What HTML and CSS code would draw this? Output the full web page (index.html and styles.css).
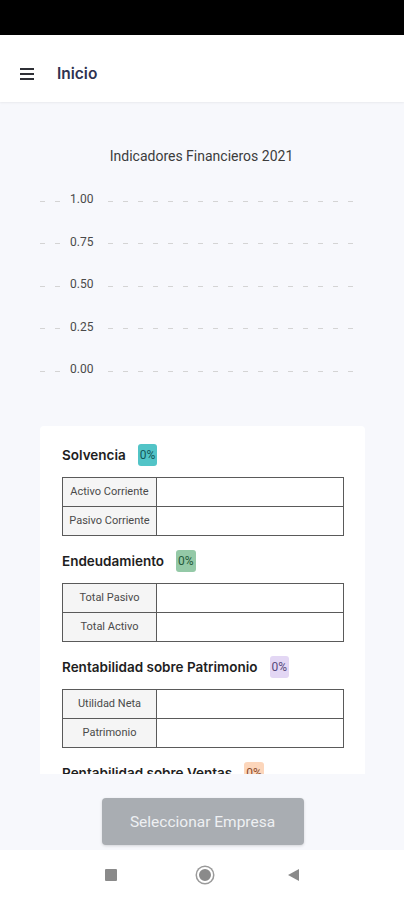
FILE: index.html
```html
<!DOCTYPE html>
<html>
    <head>
        <link rel="stylesheet" href="styles.css">
    </head>
    <body>
        <div class="status-bar"></div>
        <header class="app-bar">
            <span class="menu-icon"><i></i><i></i><i></i></span>
            <span class="app-title">Inicio</span>
        </header>
        <main class="content">
            <div class="scroll">
                <section class="chart">
                    <h2 class="chart-title">Indicadores Financieros 2021</h2>
                    <div class="axis-row"><span class="dash short"></span><span class="tick">1.00</span><span class="dash"></span></div>
                    <div class="axis-row"><span class="dash short"></span><span class="tick">0.75</span><span class="dash"></span></div>
                    <div class="axis-row"><span class="dash short"></span><span class="tick">0.50</span><span class="dash"></span></div>
                    <div class="axis-row"><span class="dash short"></span><span class="tick">0.25</span><span class="dash"></span></div>
                    <div class="axis-row"><span class="dash short"></span><span class="tick">0.00</span><span class="dash"></span></div>
                </section>
                <section class="card">
                    <div class="indicator">
                        <h3>Solvencia <span class="badge teal">0%</span></h3>
                        <table>
                            <tr><th>Activo Corriente</th><td></td></tr>
                            <tr><th>Pasivo Corriente</th><td></td></tr>
                        </table>
                    </div>
                    <div class="indicator">
                        <h3>Endeudamiento <span class="badge green">0%</span></h3>
                        <table>
                            <tr><th>Total Pasivo</th><td></td></tr>
                            <tr><th>Total Activo</th><td></td></tr>
                        </table>
                    </div>
                    <div class="indicator">
                        <h3>Rentabilidad sobre Patrimonio <span class="badge lilac">0%</span></h3>
                        <table>
                            <tr><th>Utilidad Neta</th><td></td></tr>
                            <tr><th>Patrimonio</th><td></td></tr>
                        </table>
                    </div>
                    <div class="indicator">
                        <h3>Rentabilidad sobre Ventas <span class="badge peach">0%</span></h3>
                        <table>
                            <tr><th>Utilidad Neta</th><td></td></tr>
                            <tr><th>Ventas</th><td></td></tr>
                        </table>
                    </div>
                </section>
            </div>
            <div class="actions">
                <button class="select-btn">Seleccionar Empresa</button>
            </div>
        </main>
        <nav class="nav-bar">
            <span class="nav-square"></span>
            <span class="nav-circle"></span>
            <span class="nav-back"></span>
        </nav>
    </body>
</html>
```

FILE: styles.css
```css
body{
    margin: 0;
    width: 404px;
    height: 900px;
    overflow: hidden;
    font-family: Roboto, "Liberation Sans", sans-serif;
    background-color: #f7f8fc;
}

.status-bar{
    height: 35px;
    background-color: #000;
}

.app-bar{
    height: 57px;
    padding-top: 10px;
    display: flex;
    align-items: center;
    background-color: #fff;
    box-shadow: 0 1px 2px rgba(0, 0, 0, 0.06);
    position: relative;
    z-index: 1;
}

.menu-icon{
    display: flex;
    flex-direction: column;
    gap: 3px;
    margin-left: 20px;
    margin-top: 1px;
}

.menu-icon i{
    display: block;
    width: 14px;
    height: 2px;
    background-color: #2f3036;
}

.app-title{
    margin-left: 23px;
    font-family: Inter, sans-serif;
    font-size: 15.5px;
    font-weight: 600;
    color: #2f3250;
}

.content{
    height: 748px;
    display: flex;
    flex-direction: column;
}

.scroll{
    height: 672px;
    overflow: hidden;
}

.chart{
    padding: 46px 48px 0 40px;
}

.chart-title{
    margin: 0 0 16px 7px;
    text-align: center;
    font-size: 14px;
    font-weight: 400;
    color: #3c3c3c;
}

.axis-row{
    height: 42.5px;
    display: flex;
    align-items: center;
}

.tick{
    width: 32px;
    padding: 0 6px 0 7px;
    font-size: 12px;
    color: #4a4a4a;
    text-align: left;
    position: relative;
    top: -2px;
}

.dash{
    flex: 1;
    height: 1px;
    background-image: repeating-linear-gradient(90deg, #d4d4d4 0 5px, transparent 5px 15px);
}

.dash.short{
    flex: 0 0 23px;
}

.card{
    margin: 33px 39px 0 40px;
    padding: 18px 21px 20px 22px;
    background-color: #fff;
    border-radius: 4px;
}

.indicator{
    margin-bottom: 14px;
}

.indicator h3{
    margin: 0 0 11px;
    height: 22px;
    display: flex;
    align-items: center;
    gap: 12px;
    font-family: Inter, sans-serif;
    font-size: 13.5px;
    font-weight: 600;
    color: #1e1e1e;
}

.badge{
    padding: 4px 2px;
    border-radius: 3px;
    font-family: Roboto, sans-serif;
    font-size: 12px;
    font-weight: 400;
}

.teal{
    background-color: #52c4c7;
    color: #12575a;
}

.green{
    background-color: #94c9a7;
    color: #245a3a;
}

.lilac{
    background-color: #e3d7f4;
    color: #574a7a;
}

.peach{
    background-color: #fcd6bb;
    color: #8a4a2a;
}

table{
    width: 282px;
    border-collapse: collapse;
    border: 1px solid #5a5a5a;
}

th, td{
    height: 28px;
    padding: 0;
    border: 1px solid #5a5a5a;
}

th{
    width: 93px;
    background-color: #f5f5f5;
    font-size: 11px;
    font-weight: 400;
    color: #4a4a4a;
    text-align: center;
}

.actions{
    flex: 1;
    display: flex;
    justify-content: center;
    padding-top: 24px;
}

.select-btn{
    width: 202px;
    height: 47px;
    margin-left: 1px;
    border: none;
    border-radius: 4px;
    background-color: #a9adb2;
    box-shadow: 0 1px 3px rgba(0, 0, 0, 0.15);
    font-family: Roboto, sans-serif;
    font-size: 15.5px;
    color: #eef0f2;
}

.nav-bar{
    height: 50px;
    display: flex;
    align-items: center;
    justify-content: space-between;
    padding: 0 105px 0 105px;
    background-color: #fff;
}

.nav-square{
    width: 12px;
    height: 12px;
    background-color: #8a8a8a;
    border-radius: 1px;
}

.nav-circle{
    width: 12px;
    height: 12px;
    border-radius: 50%;
    background-color: #8a8a8a;
    border: 2px solid #fff;
    box-shadow: 0 0 0 1.5px #9a9a9a;
    margin-left: 4px;
}

.nav-back{
    width: 0;
    height: 0;
    border-top: 6.5px solid transparent;
    border-bottom: 6.5px solid transparent;
    border-right: 11px solid #8a8a8a;
}
```
